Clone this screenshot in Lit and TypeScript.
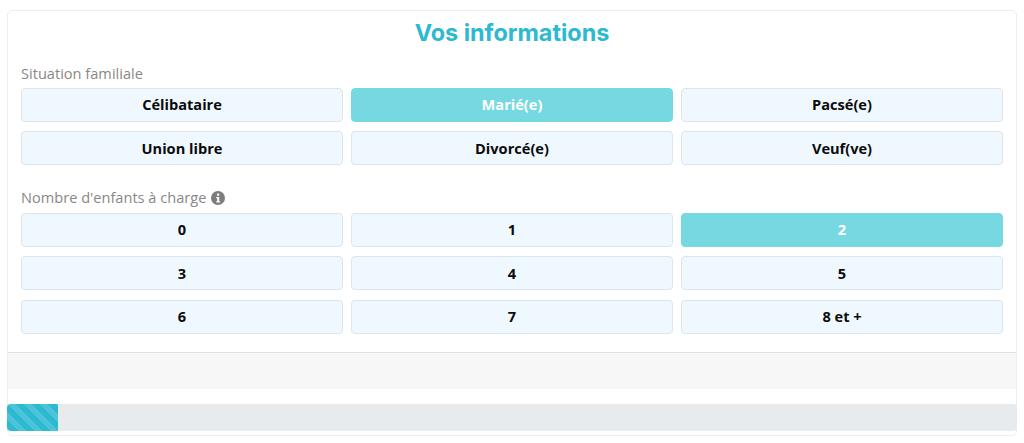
import { LitElement, html, css, svg } from "lit";
import { customElement } from "lit/decorators.js";

const SITUATIONS = ["Célibataire", "Marié(e)", "Pacsé(e)", "Union libre", "Divorcé(e)", "Veuf(ve)"];
const CHILDREN = ["0", "1", "2", "3", "4", "5", "6", "7", "8 et +"];

@customElement("app-root")
export class AppRoot extends LitElement {
  static styles = css`
    :host { display: block; font-family: "Open Sans", sans-serif; background: #fff; height: 443px; padding: 10px 7px 0; box-sizing: border-box; }
    .card { border: 1px solid #eeeeee; border-radius: 5px; height: 426px; box-sizing: border-box; background: #fff; display: flex; flex-direction: column; }
    .body { padding: 0 13px; height: 341px; box-sizing: border-box; flex: none; }
    h1 { margin: 0; height: 53px; padding-top: 6px; box-sizing: border-box; text-align: center; font: 700 23.4px/32px Inter, sans-serif; color: #2cb9d1; }
    .label { font-size: 14.6px; line-height: 19px; color: #8a8786; height: 19px; margin-bottom: 4.75px; display: flex; align-items: center; gap: 5px; }
    .label.second { margin-bottom: 5.75px; }
    .grid { display: grid; grid-template-columns: repeat(3, 322px); column-gap: 8px; row-gap: 9.5px; }
    .grid.first { margin-bottom: 22.75px; }
    .btn { height: 34px; box-sizing: border-box; border: 1px solid #dde5ea; border-radius: 4px; background: #f0f8ff; color: #0b0b0b; font-weight: 700; font-size: 14.6px; padding-bottom: 1px; display: flex; align-items: center; justify-content: center; }
    .btn.on { background: #76d9e2; border-color: #76d9e2; color: #fff; }
    .info { width: 14px; height: 14px; display: block; }
    .foot { height: 37px; background: #f7f7f7; border-top: 1px solid #e0e0e0; box-sizing: border-box; flex: none; }
    .track { margin-top: 15px; height: 27px; background: #e8ebee; border-radius: 4px; overflow: hidden; margin-left: -1px; margin-right: -1px; }
    .fill { height: 100%; width: 5%; background-color: #2cb9d1; background-size: 16px 16px; background-image: linear-gradient(45deg, rgba(255,255,255,0.15) 25%, transparent 25%, transparent 50%, rgba(255,255,255,0.15) 50%, rgba(255,255,255,0.15) 75%, transparent 75%, transparent); }
  `;

  private grid(items: string[], on: string, cls = "") {
    return html`<div class="grid ${cls}">
      ${items.map((t) => html`<div class="btn ${t === on ? "on" : ""}">${t}</div>`)}
    </div>`;
  }

  render() {
    return html`<div class="card">
      <div class="body">
        <h1>Vos informations</h1>
        <div class="label">Situation familiale</div>
        ${this.grid(SITUATIONS, "Marié(e)", "first")}
        <div class="label second">Nombre d'enfants à charge
          <svg class="info" viewBox="0 0 14 14">
            <circle cx="7" cy="7" r="7" fill="#7d7d7d"></circle>
            ${svg`<rect x="6" y="2.6" width="2.2" height="2.2" rx="0.6" fill="#fff"></rect>
            <path d="M5.2 6h3v4.2h1v1.2H5.2v-1.2h1V7.2h-1z" fill="#fff"></path>`}
          </svg>
        </div>
        ${this.grid(CHILDREN, "2")}
      </div>
      <div class="foot"></div>
      <div class="track"><div class="fill"></div></div>
    </div>`;
  }
}
